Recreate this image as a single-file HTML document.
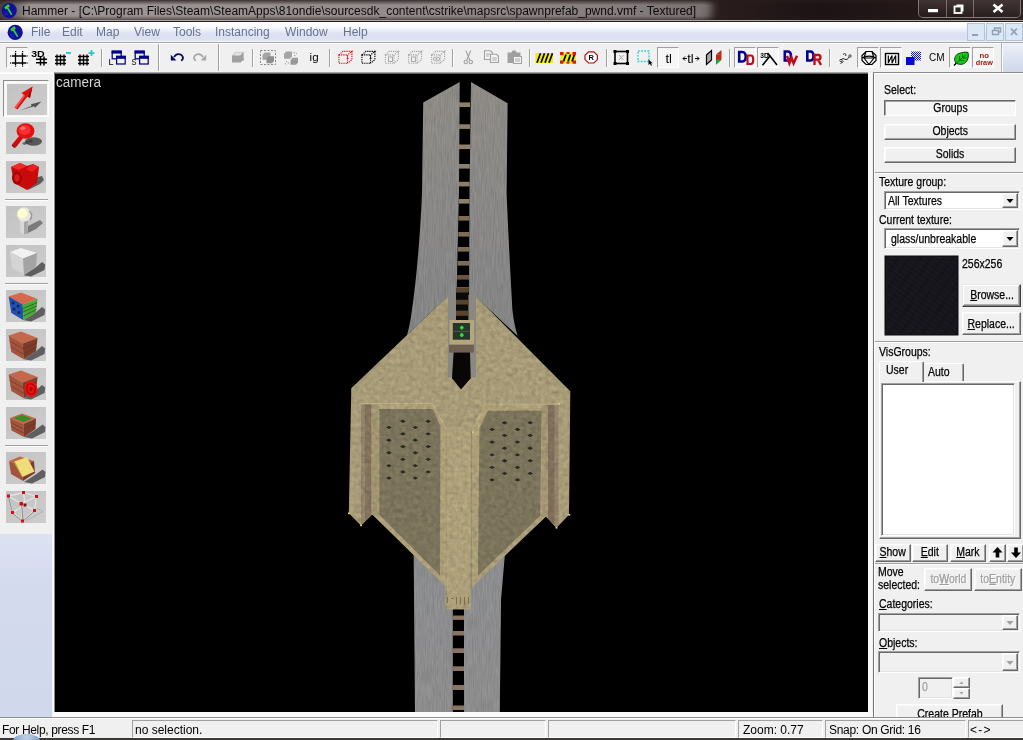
<!DOCTYPE html>
<html>
<head>
<meta charset="utf-8">
<title>Hammer</title>
<style>
html,body{margin:0;padding:0;}
body{width:1023px;height:740px;overflow:hidden;position:relative;background:#f0f0f0;font-family:"Liberation Sans",sans-serif;font-size:12px;color:#000;}
.a{position:absolute;}
.seg,.menu,.tt{will-change:transform;}
svg{will-change:transform;}
svg{position:absolute;overflow:visible;}
/* MS Sans Serif look-alike: taller, condensed */
.ms{-webkit-text-stroke:.25px currentColor;position:absolute;font-size:12.5px;line-height:14px;white-space:nowrap;transform:scaleX(0.84);transform-origin:0 0;color:#000;}
.msc{-webkit-text-stroke:.25px currentColor;position:absolute;font-size:12.5px;line-height:14px;white-space:nowrap;text-align:center;color:#000;}
.msc span{display:inline-block;transform:scaleX(0.84);}
.dis{color:#a0a0a0;text-shadow:1px 1px 0 #fff;}
u{text-decoration:underline;text-underline-offset:1px;}
/* classic 3D button */
.btn{position:absolute;box-sizing:border-box;background:#f0f0f0;border:1px solid;border-color:#fff #696969 #696969 #fff;box-shadow:inset -1px -1px 0 #a0a0a0, inset 1px 1px 0 #f8f8f8;}
.btnp{position:absolute;box-sizing:border-box;background:#f4f4f4;border:1px solid;border-color:#696969 #fff #fff #696969;box-shadow:inset 1px 1px 0 #a0a0a0;}
.sunk{position:absolute;box-sizing:border-box;border:1px solid;border-color:#a0a0a0 #fff #fff #a0a0a0;box-shadow:inset 1px 1px 0 #696969, inset -1px -1px 0 #e3e3e3;}
.hl{position:absolute;height:2px;border-top:1px solid #a0a0a0;border-bottom:1px solid #fff;box-sizing:border-box;}
.seg{position:absolute;font-size:12px;line-height:14px;white-space:nowrap;color:#000;}
.menu{position:absolute;top:25px;font-size:12px;line-height:14px;color:#66738c;white-space:nowrap;}
.chk{position:absolute;box-sizing:border-box;width:22px;height:21px;top:47px;background:#f6f6f6;border:1px solid;border-color:#a0a0a0 #fff #fff #a0a0a0;}
.vs{position:absolute;width:2px;box-sizing:border-box;border-left:1px solid #a0a0a0;border-right:1px solid #fff;}
.pane{position:absolute;top:720px;height:18px;box-sizing:border-box;border:1px solid;border-color:#a0a0a0 #fff #fff #a0a0a0;}
</style>
</head>
<body>
<!-- TITLE BAR -->
<div class="a" style="left:0;top:0;width:1023px;height:22px;background:linear-gradient(90deg,#2a1d1e 0%,#2a1d1e 70%,#1d1314 80%,#241819 90%,#2e2223 100%);overflow:hidden;">
  <div class="a" style="left:-40px;top:-6px;width:752px;height:30px;border-radius:0 12px 12px 0;background:linear-gradient(90deg,#9a9292 0%,#9c9494 25%,#938b8b 60%,#857d7d 88%,#787070 100%);filter:blur(4px);"></div>
  <div class="a" style="left:0;top:0;width:1023px;height:5px;background:linear-gradient(180deg,rgba(40,28,28,.8),rgba(40,28,28,0));"></div>
  <div class="a" style="left:0;top:16px;width:1023px;height:4px;background:linear-gradient(180deg,rgba(40,28,28,0),rgba(40,28,28,.5));"></div>
  <div class="a" style="left:0;top:0;width:30px;height:20px;background:linear-gradient(90deg,rgba(45,32,32,.75),rgba(45,32,32,0));"></div>
  <div class="a" style="left:0;top:20px;width:1023px;height:1px;background:#aaa4a4;"></div>
  <div class="a" style="left:0;top:21px;width:1023px;height:1px;background:#262222;"></div>
</div>
<svg style="left:1px;top:2px" width="17" height="17" viewBox="0 0 17 17"><circle cx="8.2" cy="8.6" r="7.6" fill="#10109c"/><circle cx="5" cy="12" r="2.2" fill="#1a1ab8"/><path d="M3.2 5.2 L7.2 2 L9 4.2 L7.4 5.6 L11.4 12.2 L10 13.2 L6 6.8 L4.8 7.4 Z" fill="#30d030"/></svg>
<div class="a tt" style="left:22px;top:4px;font-size:12px;line-height:15px;color:#0c0a0a;white-space:nowrap;">Hammer - [C:\Program Files\Steam\SteamApps\81ondie\sourcesdk_content\cstrike\mapsrc\spawnprefab_pwnd.vmf - Textured]</div>
<!-- caption buttons -->
<div class="a" style="left:918px;top:-3px;width:103px;height:21px;box-sizing:border-box;border:1px solid rgba(190,180,180,.55);border-radius:0 0 5px 5px;background:linear-gradient(180deg,rgba(90,78,78,.55),rgba(40,30,30,.35));"></div>
<div class="a" style="left:946px;top:0;width:1px;height:17px;background:rgba(190,180,180,.5);"></div>
<div class="a" style="left:973px;top:0;width:1px;height:17px;background:rgba(190,180,180,.5);"></div>
<svg style="left:918px;top:0" width="104" height="18" viewBox="918 0 104 18"><rect x="928" y="9" width="10" height="3.2" fill="#fff"/><path d="M956.5 4.5h7v7h-2v-5h-5z" fill="#fff"/><rect x="954.5" y="6.5" width="7" height="6.5" fill="none" stroke="#fff" stroke-width="1.8"/><path d="M993.5 4.5 L1002.5 12 M1002.5 4.5 L993.5 12" stroke="#fff" stroke-width="2.6" fill="none"/></svg>
<!-- MENU BAR -->
<div class="a" style="left:0;top:22px;width:1023px;height:20px;background:linear-gradient(180deg,#ffffff 0%,#fbfcfe 20%,#e9edf7 45%,#dde3f2 55%,#dbe1f0 85%,#e8ecf6 100%);"></div>
<div class="a" style="left:0;top:41px;width:1023px;height:1px;background:#f4f4f6;"></div>
<div class="a" style="left:0;top:42px;width:1023px;height:1px;background:#a8a8a8;"></div>
<svg style="left:7px;top:24px" width="17" height="17" viewBox="0 0 17 17"><circle cx="8.2" cy="8.4" r="7.6" fill="#10109c"/><circle cx="5" cy="12" r="2.2" fill="#1a1ab8"/><path d="M3.2 5.2 L7.2 2 L9 4.2 L7.4 5.6 L11.4 12.2 L10 13.2 L6 6.8 L4.8 7.4 Z" fill="#30d030"/></svg>
<div class="menu" style="left:31px">File</div>
<div class="menu" style="left:62px">Edit</div>
<div class="menu" style="left:96px">Map</div>
<div class="menu" style="left:134px">View</div>
<div class="menu" style="left:173px">Tools</div>
<div class="menu" style="left:215px">Instancing</div>
<div class="menu" style="left:285px">Window</div>
<div class="menu" style="left:343px">Help</div>
<div class="a" style="left:967px;top:23px;width:18px;height:18px;box-sizing:border-box;background:#dbe7f4;border:1px solid #b4c4d8;"></div>
<div class="a" style="left:986px;top:23px;width:18px;height:18px;box-sizing:border-box;background:#dbe7f4;border:1px solid #b4c4d8;"></div>
<div class="a" style="left:1005px;top:23px;width:18px;height:18px;box-sizing:border-box;background:#dbe7f4;border:1px solid #b4c4d8;"></div>
<svg style="left:967px;top:23px" width="56" height="18" viewBox="967 23 56 18"><rect x="972" y="34" width="6" height="2" fill="#8fa0b8"/><path d="M992.5 30.5h6v4h-6z M994.5 30v-2h6v4h-2" fill="none" stroke="#8fa0b8" stroke-width="1.4"/><path d="M1011 28.5l6 6.5m0-6.5l-6 6.5" stroke="#8fa0b8" stroke-width="1.8" fill="none"/></svg>
<!-- TOOLBAR -->
<div class="a" style="left:0;top:43px;width:1023px;height:29px;background:linear-gradient(180deg,#eef1f9 0%,#dfe5f3 40%,#cfd7ea 100%);"></div>
<div class="a" style="left:0;top:43px;width:1002px;height:29px;background:#f0f0f0;"></div>
<div class="a" style="left:0;top:43px;width:1002px;height:1px;background:#fff;"></div>
<div class="a" style="left:0;top:72px;width:54px;height:1px;background:#fafafa;"></div>
<div class="a" style="left:1001px;top:43px;width:1px;height:29px;background:#b4b4b4;"></div>
<div class="a" style="left:1002px;top:43px;width:1px;height:29px;background:#fff;"></div>
<!-- checked button backgrounds -->
<div class="chk" style="left:6px"></div>
<div class="chk" style="left:657px"></div>
<div class="chk" style="left:734px"></div>
<div class="chk" style="left:757px"></div>
<div class="chk" style="left:857px"></div>
<div class="chk" style="left:880px"></div>
<div class="chk" style="left:949px"></div>
<div class="chk" style="left:972px"></div>
<!-- separators -->
<div class="vs" style="left:101px;top:49px;height:18px"></div>
<div class="vs" style="left:158px;top:44px;height:27px"></div>
<div class="vs" style="left:218px;top:44px;height:27px"></div>
<div class="vs" style="left:252px;top:49px;height:18px"></div>
<div class="vs" style="left:329px;top:49px;height:18px"></div>
<div class="vs" style="left:452px;top:49px;height:18px"></div>
<div class="vs" style="left:529px;top:49px;height:18px"></div>
<div class="vs" style="left:606px;top:49px;height:18px"></div>
<div class="vs" style="left:729px;top:49px;height:18px"></div>
<div class="vs" style="left:829px;top:49px;height:18px"></div>
<svg style="left:0;top:43px" width="1023" height="30" viewBox="0 43 1023 30" font-family="Liberation Sans, sans-serif">
<!-- 1 grid -->
<g stroke="#000" stroke-width="1.3" fill="none"><path d="M15.500 53v12M22.500 53v12M12 56h14M12 63h14"/></g>
<g fill="#000"><rect x="15" y="51" width="1.2" height="1.2"/><rect x="22" y="51" width="1.2" height="1.2"/><rect x="10" y="55.4" width="1.2" height="1.2"/><rect x="10" y="62.4" width="1.2" height="1.2"/><rect x="26.5" y="55.4" width="1.2" height="1.2"/><rect x="26.5" y="62.4" width="1.2" height="1.2"/><rect x="15" y="65.5" width="1.2" height="1.2"/><rect x="22" y="65.5" width="1.2" height="1.2"/></g>
<!-- 2 3D grid -->
<text x="31.200" y="56.800" font-size="9.500" font-weight="bold" fill="#000" textLength="13.500" lengthAdjust="spacingAndGlyphs">3D</text>
<g stroke="#000" stroke-width="1.5" fill="none"><path d="M40.5 56.5v9M44 56.5v9M36 59.2h11M36 62.7h11"/></g>
<!-- 3 grid minus -->
<g stroke="#000" stroke-width="1.350" fill="none"><path d="M57 54.500v11M60.500 54.500v11M64 54.500v11M55 56.500h11M55 60h11M55 63.500h11"/></g>
<rect x="66" y="52" width="5" height="1.8" fill="#20c8c8"/>
<!-- 4 grid plus -->
<g stroke="#000" stroke-width="1.350" fill="none"><path d="M80 54.500v11M83.500 54.500v11M87 54.500v11M78 56.500h11M78 60h11M78 63.500h11"/></g>
<path d="M88.5 52.2h6v1.8h-6z M90.6 50h1.8v6h-1.8z" fill="#20c8c8"/>
<!-- 5,6 layers -->
<g id="lay"><rect x="112.200" y="51.200" width="9" height="7.600" fill="#f0f0f0" stroke="#000088" stroke-width="1.250"/><rect x="111.600" y="50.600" width="10.200" height="3" fill="#000088"/><rect x="116.600" y="56.400" width="8.600" height="7.600" fill="#f0f0f0" stroke="#000088" stroke-width="1.250"/><rect x="116" y="55.800" width="9.800" height="3" fill="#000088"/></g>
<use href="#lay" x="23"/>
<text x="108.600" y="64.800" font-size="9" fill="#000">L</text>
<text x="131.400" y="64.800" font-size="9" fill="#000" textLength="5" lengthAdjust="spacingAndGlyphs">S</text>
<!-- 7 undo / 8 redo -->
<path d="M170.800 54.800v5.600h5.600z" fill="#0a0a5a"/><path d="M174 57.200c1.800-3.800 7-4.200 8.600-.8.900 1.900.2 3.400-1.400 4.400" fill="none" stroke="#0a0a5a" stroke-width="1.700"/>
<path d="M206.200 54.800v5.600h-5.600z" fill="#a8a8a8"/><path d="M203 57.200c-1.800-3.800-7-4.200-8.600-.8-.9 1.900-.2 3.400 1.400 4.400" fill="none" stroke="#a8a8a8" stroke-width="1.700"/>
<!-- 9 grey cube -->
<path d="M232 55.700l3.200-3.400h8.400v7l-3 3.300h-8.600z" fill="#a0a0a0"/><path d="M232.600 55.500l3-2.900h7.200l-2.600 2.900z" fill="#e4e4e4"/><rect x="240.600" y="58.600" width="3.200" height="2" fill="#a0a0a0"/>
<!-- 10 group -->
<rect x="260.500" y="50.500" width="15" height="14" fill="none" stroke="#8a8a8a" stroke-width="1" stroke-dasharray="2 1.500"/>
<path d="M262.500 55l2-2.500h6v5l-2 2.300h-6z" fill="#a4a4a4"/><path d="M266.500 58.500l2-2.300h5.500v4.800l-2 2.200h-5.500z" fill="#8e8e8e"/>
<!-- 11 ungroup -->
<path d="M284 54l2-2.500h6v5l-2 2.300h-6z" fill="#a4a4a4"/><path d="M290.500 60l2-2.300h5.500v4.800l-2 2.200h-5.500z" fill="#9a9a9a"/>
<path d="M293.500 52.500l3.500 1M286 61l3 2.500M294 55.500l2.500.3M285 63.500l2 1" stroke="#9a9a9a" stroke-width="1" fill="none" stroke-dasharray="1.500 1"/>
<!-- 12 ig -->
<text x="309.600" y="60.800" font-size="11.500" fill="#000">ig</text>
<!-- 13-17 dotted cubes -->
<g id="dcube" fill="none" stroke-width="1.100" stroke-dasharray="1.300 .9"><path d="M338.900 54.900h8.600v8.400h-8.600z"/><path d="M338.900 54.900l4-3.500h9l-4.400 3.500"/><path d="M351.900 51.400v8.200l-4.400 3.700"/></g>
<use href="#dcube" stroke="#d01818"/>
<text x="346" y="58.500" font-size="6" fill="#d01818">1</text>
<use href="#dcube" x="23" stroke="#000"/>
<text x="369" y="58.500" font-size="6" fill="#000">1</text>
<use href="#dcube" x="46.500" stroke="#a8a8a8"/>
<rect x="388.500" y="57" width="4" height="4.500" fill="none" stroke="#a8a8a8" stroke-width="1"/>
<use href="#dcube" x="69.700" stroke="#a8a8a8"/>
<rect x="411.500" y="57" width="4" height="4.500" fill="none" stroke="#a8a8a8" stroke-width="1"/>
<use href="#dcube" x="92.700" stroke="#a8a8a8"/>
<ellipse cx="436.500" cy="59" rx="3.200" ry="2" fill="none" stroke="#a8a8a8" stroke-width="1"/><circle cx="436.500" cy="59" r="1" fill="#a8a8a8"/>
<!-- 18 scissors -->
<g stroke="#a2a2a2" stroke-width="1.100" fill="none"><path d="M465.800 50.500l4 9.500M470.800 50.500l-4 9.500"/><circle cx="465.800" cy="62" r="1.700"/><circle cx="470.800" cy="62" r="1.700"/></g>
<!-- 19 copy -->
<g stroke="#a2a2a2" stroke-width="1.100" fill="#f4f4f4"><path d="M484.500 50.800h6l2 2v6.700h-8z"/><path d="M490.500 54.300h6l2 2v6.200h-8z"/></g>
<path d="M486 54h4M486 56h3M492.300 58h4.500M492.300 60h4.500" stroke="#a2a2a2" stroke-width=".9"/>
<!-- 20 paste -->
<path d="M507.500 52.500h4l1-2h3l1 2h4v10.500h-13z" fill="#a0a0a0"/>
<rect x="513.500" y="56.500" width="8" height="7" fill="#f4f4f4" stroke="#a0a0a0" stroke-width="1"/>
<path d="M515 59h5M515 61h5" stroke="#a0a0a0" stroke-width=".9"/>
<!-- 21 hazard -->
<rect x="535.500" y="53" width="17.500" height="10" fill="#f0f000"/>
<g stroke="#000" stroke-width="1.700"><path d="M537 62.800l3.500-9.600M541 62.800l3.500-9.600M545 62.800l3.500-9.600M549 62.800l3.500-9.600"/></g>
<!-- 22 hazard red -->
<rect x="560.500" y="52.500" width="15.500" height="11" fill="#f0f000"/>
<g stroke="#000" stroke-width="1.800"><path d="M563.500 61.500l2.500-7M568 61.500l2.500-7M572 61.500l2.500-7"/></g>
<g fill="#d81818"><rect x="560" y="52" width="3.500" height="3.200"/><rect x="572.500" y="52" width="3.500" height="3.200"/><rect x="560" y="60.500" width="3.500" height="3.200"/><rect x="572.500" y="60.500" width="3.500" height="3.200"/><rect x="566.500" y="52" width="3" height="2"/><rect x="566.500" y="61.700" width="3" height="2"/></g>
<!-- 23 (R) -->
<path d="M588.600 51.800h5.200l3.600 3.400v4.400l-3.600 3.400h-5.200l-3.600-3.400v-4.400z" fill="#fff" stroke="#b01010" stroke-width="1.200"/>
<text x="588.600" y="60.400" font-size="7.500" font-weight="bold" fill="#000">R</text>
<!-- 24 box select -->
<rect x="615" y="51.500" width="12.500" height="12" fill="none" stroke="#000" stroke-width="1.600"/>
<g fill="#000"><rect x="613.500" y="50" width="3" height="3"/><rect x="626" y="50" width="3" height="3"/><rect x="613.500" y="62" width="3" height="3"/><rect x="626" y="62" width="3" height="3"/></g>
<path d="M619 55l4.500 5m0-5l-4.500 5" stroke="#aaa" stroke-width="1"/>
<!-- 25 cyan dotted -->
<rect x="638" y="51" width="11" height="10.500" fill="none" stroke="#30d0d0" stroke-width="1.400" stroke-dasharray="1.800 1.300"/>
<path d="M648.500 59.500v5.500l1.400-1.300 1.200 2 .9-.5-1.200-2h1.900z" fill="#000"/>
<!-- 26 tl -->
<text x="665.400" y="62.600" font-size="13" fill="#000">tl</text>
<!-- 27 <tl> -->
<text x="687.200" y="62.600" font-size="13" fill="#000">tl</text>
<path d="M683 58.500h4M683 58.500l2-2M683 58.500l2 2M699 58.500h-4M699 58.500l-2-2M699 58.500l-2 2" stroke="#000" stroke-width="1" fill="none"/>
<!-- 28 faces -->
<path d="M706.500 55l5-4.500v9.500l-5 4.500z" fill="#a8a8a8" stroke="#000" stroke-width="1.200"/>
<path d="M716 54.500l5.500-4.500v5z" fill="#c02818"/><path d="M716 54.500l5.500 .5v4.500l-5.500 5z" fill="#c02818"/><path d="M716 59.500l5.500 .2v0l-5.500 5z" fill="#20a040"/>
<!-- 29 OD -->
<path d="M739.200 52h3.200c4.400 0 4.400 9.500 0 9.500h-3.200z" fill="none" stroke="#000090" stroke-width="2.600"/>
<path d="M747.500 55.500h3.500c3 0 3 8.500 0 8.500h-3.500z" fill="none" stroke="#c00c14" stroke-width="2.200"/>
<!-- 30 3D lambda -->
<text x="760.300" y="58" font-size="7.500" font-weight="bold" fill="#000" textLength="8.500" lengthAdjust="spacingAndGlyphs">3D</text>
<path d="M767.500 53l2.500 3l-7.500 9.200M770 56l7 9" stroke="#000" stroke-width="1.600" fill="none"/>
<!-- 31 OW -->
<path d="M784.800 51.500h3c4.200 0 4.200 9 0 9h-3z" fill="none" stroke="#000090" stroke-width="2.600"/>
<path d="M787 55.800l2.400 7.400 2.100-5.400 2.100 5.400 3.400-7.400" fill="none" stroke="#c00c14" stroke-width="2.500" stroke-linejoin="miter"/>
<!-- 32 OR -->
<path d="M807.300 51.500h3c4.200 0 4.200 9 0 9h-3z" fill="none" stroke="#000090" stroke-width="2.600"/>
<path d="M814.500 65v-10h4c2.600 0 2.600 4.600 0 4.600h-4m3.500 0l3 5.400" fill="none" stroke="#c00c14" stroke-width="2.400"/>
<!-- 33 path -->
<path d="M841 60c3-4 5 3 8-3M843 54.500c2-2 4 0 2.500 1.500M840.500 63.500l3-2" stroke="#222" stroke-width="1" fill="none"/><circle cx="841" cy="60.500" r="1.200" fill="none" stroke="#222" stroke-width=".8"/><circle cx="850" cy="56" r="1.200" fill="none" stroke="#222" stroke-width=".8"/>
<!-- 34 sphere -->
<g stroke="#000" stroke-width="1.200" fill="none"><path d="M866 51.500h6l4 4v5l-4 4h-6l-4-4v-5z"/><path d="M862 58c3-2.500 11-2.500 14 0M866 51.500l-2 6.500 5 6.500M872 51.500l2 6.500-5 6.500M864 58h10"/></g>
<!-- 35 WW -->
<rect x="885.500" y="53.500" width="13" height="11" fill="#fff" stroke="#000" stroke-width="1.400"/>
<path d="M888.300 55.500v7.500l3.700-7.500v7.500l3.700-7.500v7.500" stroke="#000" stroke-width="1.150" fill="none"/>
<!-- 36 blue squares -->
<defs><pattern id="dith" width="2" height="2" patternUnits="userSpaceOnUse"><rect width="2" height="2" fill="#f0f0f0"/><rect width="1" height="1" fill="#1010e0"/><rect x="1" y="1" width="1" height="1" fill="#1010e0"/></pattern></defs>
<rect x="911" y="51.500" width="10" height="9" fill="url(#dith)"/>
<rect x="906" y="57" width="8.500" height="8" fill="#0808d8"/>
<!-- 37 CM -->
<text x="929" y="61.400" font-size="10" fill="#000" textLength="15.500" lengthAdjust="spacingAndGlyphs">CM</text>
<!-- 38 leaf -->
<path d="M954 65.500l2.500-2.500" stroke="#000" stroke-width="1.400"/>
<path d="M956 63c-2.500-3-1.500-8 3-9.500c3-1.200 6.500-1.800 9-1 .8 3.500.3 7.500-2.500 10-2.500 2.300-6.500 2.500-9.500.5z" fill="#18c818" stroke="#004000" stroke-width="1"/>
<path d="M957 62.500l8.500-7.500M959.500 60v-4M962.500 57.500v-3M960 60.500h4M963 58h3.500" stroke="#006000" stroke-width=".9" fill="none"/>
<!-- 39 no draw -->
<text x="979.500" y="58" font-size="8" font-weight="bold" fill="#a81818" textLength="9.500" lengthAdjust="spacingAndGlyphs">no</text>
<text x="975.800" y="65" font-size="8" font-weight="bold" fill="#a81818" textLength="17" lengthAdjust="spacingAndGlyphs">draw</text>
</svg>
<!-- LEFT PALETTE -->
<div class="a" style="left:0;top:73px;width:54px;height:461px;background:#f0f0f0;"></div>
<div class="a" style="left:0;top:73px;width:54px;height:1px;background:#fff;"></div>
<div class="a" style="left:0;top:534px;width:54px;height:183px;background:linear-gradient(180deg,#dde2f2,#d3daee 30%,#d0d8ec);"></div>
<div class="a" style="left:52px;top:73px;width:1px;height:644px;background:#f4f4f6;"></div>
<div class="a" style="left:53px;top:73px;width:1px;height:644px;background:#fcfcfc;"></div>
<div class="a" style="left:54px;top:73px;width:1px;height:640px;background:#8a8a8a;"></div>
<div class="a" style="left:3px;top:80px;width:46px;height:37px;box-sizing:border-box;background:#f7f7f7;border:1px solid;border-color:#8c8c8c #fff #fff #8c8c8c;"></div>
<div class="hl" style="left:5px;top:199px;width:43px;"></div>
<div class="hl" style="left:5px;top:283px;width:43px;"></div>
<div class="hl" style="left:5px;top:445px;width:43px;"></div>
<svg style="left:0;top:73px" width="54" height="461" viewBox="0 73 54 461">
<defs>
<linearGradient id="tbg" x1="0" y1="0" x2="1" y2="1"><stop offset="0" stop-color="#c2c2c2"/><stop offset="1" stop-color="#cdcdcd"/></linearGradient>
<g id="tile"><rect width="40" height="32" fill="url(#tbg)"/></g>
<path id="shad" d="M17.600 30.300L30 22.300 36 17l3.200 2.500L38.500 25 25 31.500z" fill="#4c4c4c" opacity=".85"/>
<g id="brick"><use href="#shad"/><path d="M2.700 6.500L15 2.600 31.600 9 16.700 14.400z" fill="#c4684c"/><path d="M2.700 6.500L16.700 14.400 17.600 30.300 5.300 23z" fill="#a4543c"/><path d="M16.700 14.400L31.600 9 30 22.300 17.600 30.300z" fill="#7c3c2c"/><path d="M3.500 12l13.500 7.700M4.300 17.500l13 7.700M17 19.700l14-5.800M17.300 25l13.300-7" stroke="#5a2c20" stroke-width=".7" fill="none" opacity=".7"/></g>
</defs>
<!-- 1 arrow (pressed) -->
<g transform="translate(7,84)"><rect width="40" height="31" fill="url(#tbg)"/><path d="M12.500 26.500l12-4.500-.5-1.800 10.500-2.700-6.500 6.200-.8-1.500z" fill="#3c3c3c" opacity=".85"/><path d="M7.500 23.500L17 11l-2.500-2L25.500 2.500 23 14l-2.500-1.500L10.500 25.500z" fill="#e01010"/><path d="M7.500 23.500L17 11l1.200.8L9 24.700z" fill="#ff5050"/><path d="M20.500 12.500L23 14l2.500-11.500z" fill="#a00808"/></g>
<!-- 2 magnifier -->
<g transform="translate(6,122)"><use href="#tile"/><ellipse cx="27.500" cy="19.500" rx="8.500" ry="4.200" fill="#3c3c3c" opacity=".8"/><path d="M16 21l10-4 1 3-9 3z" fill="#3c3c3c" opacity=".7"/><path d="M6.500 22l7-8.500 3.500 2.800-7 9z" fill="#d00a0a"/><path d="M6.500 22l3.500 3.300-1.800.8-2.600-2.500z" fill="#900606"/><ellipse cx="19.500" cy="9" rx="9" ry="7.800" fill="#e01212"/><ellipse cx="18.500" cy="8" rx="6" ry="5" fill="#f43030"/><ellipse cx="16.800" cy="6.300" rx="2.400" ry="1.800" fill="#ff6a6a"/></g>
<!-- 3 camera -->
<g transform="translate(6,161)"><use href="#tile"/><path d="M22 29l12-6 4-4-2-4-8 2z" fill="#4a4a4a" opacity=".85"/><path d="M5 6l9-4 7 3 6-2 6 3-2 16-10 7-13-7z" fill="#c80a0a"/><path d="M5 6l9-4 7 3-8 4z" fill="#f02828"/><ellipse cx="11" cy="17" rx="5" ry="6.500" fill="#a00606"/><ellipse cx="11" cy="17" rx="2.600" ry="3.800" fill="#e01818"/><path d="M20 8l7-5 6 3-7 5z" fill="#e82020"/></g>
<!-- 4 light bulb -->
<g transform="translate(6,206)"><use href="#tile"/><path d="M20 28l10-5 7-6-3-3-12 6z" fill="#5a5a5a" opacity=".7"/><path d="M14 14h8l-.5 12.500-3.500 2-3.500-2z" fill="#d8d8d8"/><path d="M18 14h4l-.5 12.500-3.500 2z" fill="#a8a8a8"/><circle cx="18" cy="8.500" r="7.200" fill="#e8e8e0"/><circle cx="16.500" cy="7.500" r="4.800" fill="#ffffd0"/><path d="M23 5c3 2 3.500 6 1 9" stroke="#999" stroke-width="1.500" fill="none"/></g>
<!-- 5 grey cube -->
<g transform="translate(6,245)"><use href="#tile"/><use href="#shad"/><path d="M4 7L15 3 31 8 17 13.500z" fill="#f2f2f2"/><path d="M4 7L17 13.500 18 29.500 6 23z" fill="#d4d4d4"/><path d="M17 13.500L31 8 30 22 18 29.500z" fill="#a4a4a4"/></g>
<!-- 6 textured cube -->
<g transform="translate(6,290)"><use href="#tile"/><use href="#shad"/><path d="M2.700 6.500L15 2.600 31.600 9 16.700 14.400z" fill="#d8684c"/><path d="M2.700 6.500L16.700 14.400 17.600 30.300 5.300 23z" fill="#2050b0"/><path d="M16.700 14.400L31.600 9 30 22.300 17.600 30.300z" fill="#48a838"/><path d="M17 18.500l14-5.800M17.200 22l13.500-6M17.400 26l13-6.500" stroke="#2a7020" stroke-width="1" fill="none"/><g fill="#102860"><circle cx="7" cy="13" r="1.500"/><circle cx="12" cy="16" r="1.500"/><circle cx="8" cy="19" r="1.500"/><circle cx="13" cy="22.500" r="1.500"/></g></g>
<!-- 7 brick cube -->
<g transform="translate(6,329)"><use href="#tile"/><use href="#brick"/></g>
<!-- 8 brick + decal -->
<g transform="translate(6,368)"><use href="#tile"/><use href="#brick"/><ellipse cx="25" cy="21" rx="6.500" ry="8" fill="#f01010" transform="rotate(-12 25 21)"/><ellipse cx="25" cy="21" rx="4.200" ry="5.400" fill="none" stroke="#a00808" stroke-width="1.200" transform="rotate(-12 25 21)"/><ellipse cx="25" cy="21" rx="1.600" ry="2.200" fill="#a00808"/></g>
<!-- 9 brick + grass -->
<g transform="translate(6,407)"><use href="#tile"/><path d="M18 30l12.500-8 6-4.500 3 2.500-.5 5-13 6.500z" fill="#4c4c4c" opacity=".85"/><path d="M4 11L16 6.500 30 11.500 17.500 17z" fill="#c4684c"/><path d="M7.500 11l8.500-3 10 3.500-8.500 3.500z" fill="#3c8c24"/><path d="M4 11L17.500 17 18 30 5.500 23.500z" fill="#a4543c"/><path d="M17.500 17L30 11.500 29.500 22 18 30z" fill="#7c3c2c"/><path d="M4.600 15.500l13 6.500M5 19.500l13 6.500M17.700 22l12-5.800" stroke="#5a2c20" stroke-width=".7" fill="none" opacity=".7"/></g>
<!-- 10 brick + overlay -->
<g transform="translate(6,452)"><use href="#tile"/><path d="M18 30l12.500-8 6-4.500 3 2.500-.5 5-13 6.500z" fill="#4c4c4c" opacity=".85"/><path d="M3 9L14 4.500 28 9 16 14z" fill="#c4684c"/><path d="M3 9L16 14 17 29 5 22z" fill="#a4543c"/><path d="M16 14L28 9 29 21 17 29z" fill="#7c3c2c"/><path d="M8.500 9.500L21 5l7.500 14.500L16.500 25z" fill="#f0dc78"/><path d="M8.500 9.500l8 15.500-1.500-1.500L7.500 10z" fill="#b8a050"/></g>
<!-- 11 vertex cube -->
<g transform="translate(6,491)"><use href="#tile"/><path d="M20 30l12-7 5-2.500-6-3" stroke="#aaa" stroke-width=".8" fill="none"/><g stroke="#e4e4e4" stroke-width="1.300" fill="none"><path d="M2.500 5L17.500 1.500 30.500 5.500 15 12.500z"/><path d="M2.500 5L6.500 21.500 16.500 30 15 12.500M16.500 30L28.500 19.500 30.500 5.500M17.500 1.500L19 14 6.500 21.500M19 14l9.500 5.500"/></g><g stroke="#555" stroke-width=".6" fill="none"><path d="M2.500 5.500L6.500 22 16.500 30.500M15.500 12.500l1.500 17.500M16.500 30.500L28.500 20"/></g><g fill="#d01010"><rect x="1" y="3.500" width="3" height="3"/><rect x="16" y="0" width="3" height="3"/><rect x="29" y="4" width="3" height="3"/><rect x="13.500" y="11" width="3.500" height="3.500"/><rect x="5" y="20" width="3" height="3"/><rect x="15" y="28.500" width="3" height="3"/><rect x="27" y="18" width="3" height="3"/><rect x="17.500" y="12.500" width="3" height="3" fill="#801010"/></g></g>
</svg>
<!-- VIEWPORT -->
<div class="a" style="left:54px;top:72px;width:814px;height:1px;background:#a4a4a4;"></div>
<div class="a" style="left:54px;top:73px;width:814px;height:1px;background:#5a5a5a;"></div>
<div class="a" style="left:55px;top:74px;width:813px;height:638px;background:#000;"></div>
<div class="a" style="left:53px;top:712px;width:820px;height:5px;background:#fbfbfb;"></div>
<div class="a" style="left:868px;top:73px;width:4px;height:644px;background:#f8f8f8;"></div>
<svg style="left:55px;top:73px" width="813" height="639" viewBox="55 73 813 639" font-family="Liberation Sans, sans-serif">
<defs>
<filter id="nz" x="0" y="0" width="100%" height="100%"><feTurbulence type="fractalNoise" baseFrequency="0.22" numOctaves="3" seed="3"/><feColorMatrix type="matrix" values="0 0 0 0 0  0 0 0 0 0  0 0 0 0 0  .7 .7 .7 0 -0.75"/></filter>
<filter id="nz2" x="0" y="0" width="100%" height="100%"><feTurbulence type="fractalNoise" baseFrequency="0.9 0.06" numOctaves="2" seed="7"/><feColorMatrix type="matrix" values="0 0 0 0 0  0 0 0 0 0  0 0 0 0 0  .8 .8 .8 0 -0.95"/></filter>
<linearGradient id="roadU" x1="0" y1="82" x2="0" y2="340" gradientUnits="userSpaceOnUse"><stop offset="0" stop-color="#94918c"/><stop offset="1" stop-color="#8a8a8c"/></linearGradient>
<linearGradient id="roadL" x1="0" y1="545" x2="0" y2="712" gradientUnits="userSpaceOnUse"><stop offset="0" stop-color="#929396"/><stop offset="1" stop-color="#929292"/></linearGradient>
<clipPath id="cRoad"><path d="M459.700 82L423.200 102.400 422 194Q419 260 412 310Q410 325 407 335L447 297 456.500 297 459 190Z M471 82L507.600 103.200 506.600 194Q509 250 512.400 310Q514 325 517.700 336L476 297 469 297 469.500 194Z M413.600 545L415 712 452.800 712 452.800 600 464 600 464 712 499.800 712 501 600 505.700 545Z"/></clipPath>
<clipPath id="cSand"><path id="sandP" d="M447.400 296.600L476 296.600 570.300 391.300 569 514.800 556.400 527.800 546 516.500 507 553.700 478 581.500 471 588.500 471 609.200 445.200 609.200 445.200 586 372.300 514.500 361 525.400 348.800 513.200 351.300 388.200Z"/></clipPath>
</defs>
<!-- upper road -->
<path d="M459.700 82L423.200 102.400 422 194Q419 260 412 310Q410 325 407 335L447 297 456.500 297 459 190Z" fill="url(#roadU)"/>
<path d="M471 82L507.600 103.200 506.600 194Q509 250 512.400 310Q514 325 517.700 336L476 297 469 297 469.500 194Z" fill="url(#roadU)"/>
<!-- lower road -->
<path d="M413.600 545L415 712 452.800 712 452.800 600 464 600 464 712 499.800 712 501 600 505.700 545Z" fill="url(#roadL)"/>
<g clip-path="url(#cRoad)"><rect x="400" y="80" width="125" height="632" fill="#2a2a30" filter="url(#nz2)" opacity=".16"/></g>
<!-- upper ladder rungs -->
<g fill="#8e7e6c"><rect x="459" y="102.400" width="11" height="4.600"/><rect x="459" y="124.300" width="11" height="4.600"/><rect x="459" y="144.500" width="11" height="4.600"/><rect x="459" y="164" width="10.800" height="4.600"/><rect x="459" y="181.800" width="10.600" height="4.600"/><rect x="459" y="199" width="10.500" height="4.600"/></g>
<g fill="#7e6c5a"><rect x="458.600" y="216" width="10.800" height="4.600"/><rect x="458.300" y="232" width="11" height="4.600"/><rect x="458" y="247" width="11.200" height="4.600"/><rect x="457.600" y="261" width="11.500" height="4.600"/></g>
<g fill="#6a5644"><rect x="457.200" y="275" width="11.800" height="4.600"/><rect x="456.800" y="287" width="12.200" height="4.800"/></g>
<!-- lower ladder rungs -->
<g fill="#8a7462"><rect x="452.800" y="615.500" width="11.200" height="4.400"/><rect x="452.800" y="631" width="11.200" height="4.500"/><rect x="452.800" y="648.300" width="11.200" height="4.700"/><rect x="452.800" y="666.300" width="11.200" height="4.700"/><rect x="452.800" y="685" width="11.200" height="5"/><rect x="452.800" y="705.500" width="11.200" height="4.500"/></g>
<!-- sand diamond -->
<use href="#sandP" fill="#b3a680"/>
<g clip-path="url(#cSand)">
<rect x="446.400" y="431" width="25" height="180" fill="#b9ab82"/><path d="M446.400 431v180M471.400 431v180" stroke="#9c9074" stroke-width=".9"/>
<!-- left courtyard -->
<path d="M360.600 403L432.500 403 446.500 429 446.500 587 372.300 514.500 361 525.400 360.600 520Z" fill="#b8aa80"/>
<path d="M361 404.500L364.500 404.500 364.500 522 361 525Z" fill="#9c8c72"/><path d="M364.500 404.500L371.500 404.500 371.500 515 364.500 522Z" fill="#8c7a64"/>
<path d="M371.500 404.500h7.800v110l-7.800 .5z" fill="#ad9f78"/>
<path d="M379.300 408.900L432.900 408.900 440.400 426.300 440 575.400 379.300 514.800Z" fill="#847c62"/>
<path d="M360.600 403.500L432.500 403.500 446.500 429.500" stroke="#c8ba90" stroke-width="1" fill="none"/>
<!-- right courtyard -->
<path d="M559.400 403.700L485.600 403.700 472.400 429 472.400 583 546 516.500 556.400 527.800 559.400 524Z" fill="#b8aa80"/>
<path d="M554.700 404.500L558.500 404.500 558.500 525.500 556.400 527.500 554.700 526Z" fill="#9c8c72"/><path d="M547.800 404.500L554.700 404.500 554.700 526 547.800 518.500Z" fill="#887662"/>
<path d="M541.500 404.500h6.300v114l-6.300-2z" fill="#ad9f78"/>
<path d="M541.500 410.700L488 410.700 479.400 427.800 478 575.600 540.200 515.700Z" fill="#847c62"/>
<path d="M559.400 404.200L485.600 404.200 472.400 429.500" stroke="#c8ba90" stroke-width="1" fill="none"/>
<!-- spikes -->
<g fill="#2e2c24">
<g id="spL"><path d="M400 421.300l2.800-1.700 3 1.700-2.900 1.600zM425.300 421.300l2.800-1.700 3 1.700-2.900 1.600zM386 427.500l2.800-1.700 3 1.700-2.900 1.600zM412.400 427.500l2.800-1.700 3 1.700-2.900 1.600z"/></g>
<use href="#spL" y="12.700"/><use href="#spL" y="25.300"/><use href="#spL" y="38.200"/><use href="#spL" y="50.600"/>
<g id="spR"><path d="M501.700 422.800l2.800-1.700 3 1.700-2.900 1.600zM527.300 422.800l2.800-1.700 3 1.700-2.900 1.600zM489.200 429.400l2.800-1.700 3 1.700-2.900 1.600zM514.600 429.400l2.800-1.700 3 1.700-2.900 1.600z"/></g>
<use href="#spR" y="12.700"/><use href="#spR" y="25.500"/><use href="#spR" y="38"/><use href="#spR" y="50.600"/>
</g>
<!-- noise on sand -->
<rect x="345" y="290" width="230" height="325" fill="#4a3c20" filter="url(#nz)" opacity=".22"/>
</g>
<!-- centre frame -->
<rect x="448" y="295" width="28" height="82.500" fill="#8b8782"/>
<rect x="456" y="288" width="12.400" height="32" fill="#0c0a08"/>
<g fill="#57452f"><rect x="456" y="288" width="12.400" height="4.500"/><rect x="456" y="299.800" width="12.400" height="4.700"/><rect x="456" y="310.600" width="12.400" height="5.200"/></g>
<rect x="449.400" y="320" width="24.800" height="24.500" fill="#b4a57b"/>
<rect x="452.800" y="323" width="17.200" height="16.700" fill="#27352c"/>
<path d="M452.800 331.300h17.200" stroke="#4a5a4c" stroke-width="1"/>
<g fill="#2ee02e"><path d="M459.600 328.300l1-2 1.200-.8 1.200.8 1 2-1.200.3v1h-2v-1z"/><path d="M459.600 335.600l1-2 1.200-.8 1.200.8 1 2-1.200.3v1h-2v-1z"/></g>
<rect x="449" y="344.800" width="24.800" height="7.800" fill="#6e5f50"/>
<path d="M453.600 352.600L470 352.600 470.700 378.200 461 389.400 452 378.200Z" fill="#090706"/>
<!-- column markings -->
<path d="M447.500 597v6M451 598.500h2.500M456.500 597v7.500M460.500 597v7.500M464.500 597v8M468.500 597v7" stroke="#6e6248" stroke-width=".8" fill="none"/>
<!-- corner highlights -->
<g fill="#e8dc70"><rect x="348" y="512.600" width="1.800" height="1.600"/><rect x="360.200" y="524.600" width="1.800" height="1.600"/><rect x="568.400" y="514" width="1.800" height="1.600"/><rect x="555.600" y="527" width="1.800" height="1.600"/><rect x="558.600" y="403" width="1.600" height="1.600"/><rect x="472" y="431.500" width="1.400" height="1.400"/></g>
<text x="56" y="87" font-size="14" fill="#d4d4d4" textLength="45" lengthAdjust="spacingAndGlyphs">camera</text>
</svg>
<!-- RIGHT PANEL -->
<div class="a" style="left:873px;top:73px;width:150px;height:645px;background:#f0f0f0;"></div>
<div class="a" style="left:873px;top:72px;width:1px;height:645px;background:#747474;"></div>
<div class="a" style="left:874px;top:73px;width:1px;height:644px;background:#fff;"></div>
<div class="a" style="left:873px;top:72px;width:150px;height:1px;background:#8c8c8c;"></div>
<div class="a" style="left:874px;top:73px;width:149px;height:1px;background:#fff;"></div>
<div class="ms" style="left:884px;top:83px;">Select:</div>
<div class="btnp" style="left:884px;top:100px;width:132px;height:16px;background:#f6f6f6;"></div>
<div class="msc" style="left:884px;top:101px;width:132px;"><span>Groups</span></div>
<div class="btn" style="left:884px;top:124px;width:132px;height:16px;"></div>
<div class="msc" style="left:884px;top:124px;width:132px;"><span>Objects</span></div>
<div class="btn" style="left:884px;top:147px;width:132px;height:16px;"></div>
<div class="msc" style="left:884px;top:147px;width:132px;"><span>Solids</span></div>
<div class="hl" style="left:875px;top:172px;width:148px;"></div>
<div class="ms" style="left:879px;top:175px;">Texture group:</div>
<div class="sunk" style="left:884px;top:191px;width:136px;height:19px;background:#fff;"></div>
<div class="ms" style="left:888px;top:194px;">All Textures</div>
<div class="btn" style="left:1002px;top:193px;width:16px;height:15px;"></div>
<svg style="left:1002px;top:193px" width="16" height="15"><path d="M4.5 6h7l-3.5 4z" fill="#000"/></svg>
<div class="ms" style="left:879px;top:213px;">Current texture:</div>
<div class="sunk" style="left:884px;top:228px;width:136px;height:21px;background:#fff;"></div>
<div class="ms" style="left:891px;top:232px;">glass/unbreakable</div>
<div class="btn" style="left:1002px;top:230px;width:16px;height:17px;"></div>
<svg style="left:1002px;top:231px" width="16" height="15"><path d="M4.5 6h7l-3.5 4z" fill="#000"/></svg>
<!-- texture swatch -->
<svg style="left:885px;top:256px" width="73" height="79" viewBox="0 0 73 79"><defs><pattern id="gl" width="9" height="9" patternUnits="userSpaceOnUse" patternTransform="rotate(35)"><rect width="9" height="9" fill="#15151b"/><path d="M0 2h9M0 6.5h9" stroke="#1a1a21" stroke-width="1"/><path d="M3 0v9" stroke="#101015" stroke-width="1"/></pattern></defs><rect width="73" height="79" fill="url(#gl)"/><rect width="73" height="79" fill="none" stroke="#0a0a0e" stroke-width="1"/></svg>
<div class="ms" style="left:962px;top:257px;">256x256</div>
<div class="btn" style="left:962px;top:284px;width:59px;height:23px;border-color:#e8e8e8 #404040 #404040 #e8e8e8;box-shadow:inset -1px -1px 0 #808080, inset 1px 1px 0 #fff, inset -2px -2px 0 #b0b0b0;"></div>
<div class="msc" style="left:963px;top:288px;width:59px;"><span><u>B</u>rowse...</span></div>
<div class="btn" style="left:962px;top:312px;width:59px;height:23px;"></div>
<div class="msc" style="left:962px;top:317px;width:59px;"><span><u>R</u>eplace...</span></div>
<div class="hl" style="left:875px;top:341px;width:148px;"></div>
<div class="ms" style="left:879px;top:345px;">VisGroups:</div>
<!-- tabs -->
<div class="a" style="left:879px;top:381px;width:142px;height:158px;box-sizing:border-box;border:1px solid;border-color:#fff #696969 #696969 #fff;box-shadow:inset -1px -1px 0 #a0a0a0;"></div>
<div class="a" style="left:879px;top:361px;width:45px;height:21px;box-sizing:border-box;background:#f0f0f0;border:1px solid;border-color:#fff #696969 transparent #fff;border-bottom:none;border-radius:2px 2px 0 0;box-shadow:inset -1px 0 0 #a0a0a0;"></div>
<div class="a" style="left:924px;top:363px;width:40px;height:18px;box-sizing:border-box;background:#f0f0f0;border:1px solid;border-color:#fff #696969 transparent #f0f0f0;border-bottom:none;border-radius:2px 2px 0 0;box-shadow:inset -1px 0 0 #a0a0a0;"></div>
<div class="ms" style="left:886px;top:363px;">User</div>
<div class="ms" style="left:928px;top:365px;">Auto</div>
<div class="sunk" style="left:881px;top:383px;width:134px;height:153px;background:#fff;"></div>
<!-- buttons row -->
<div class="btn" style="left:875px;top:544px;width:36px;height:18px;"></div>
<div class="msc" style="left:875px;top:545px;width:36px;"><span><u>S</u>how</span></div>
<div class="btn" style="left:912px;top:544px;width:36px;height:18px;"></div>
<div class="msc" style="left:912px;top:545px;width:36px;"><span><u>E</u>dit</span></div>
<div class="btn" style="left:950px;top:544px;width:36px;height:18px;"></div>
<div class="msc" style="left:950px;top:545px;width:36px;"><span><u>M</u>ark</span></div>
<div class="btn" style="left:989px;top:544px;width:17px;height:18px;"></div>
<div class="btn" style="left:1007px;top:544px;width:17px;height:18px;"></div>
<svg style="left:989px;top:544px" width="34" height="18" viewBox="989 544 34 18"><path d="M997.5 547l5 5.5h-3.2v5h-3.6v-5h-3.2z" fill="#000"/><path d="M1016 558l5-5.5h-3.2v-5h-3.6v5h-3.2z" fill="#000"/></svg>
<div class="hl" style="left:875px;top:563px;width:148px;"></div>
<div class="ms" style="left:878px;top:566px;line-height:13px;">Move<br>selected:</div>
<div class="btn" style="left:924px;top:568px;width:48px;height:23px;"></div>
<div class="msc dis" style="left:924px;top:572px;width:48px;"><span>to<u>W</u>orld</span></div>
<div class="btn" style="left:974px;top:568px;width:48px;height:23px;"></div>
<div class="msc dis" style="left:974px;top:572px;width:48px;"><span>to<u>E</u>ntity</span></div>
<div class="ms" style="left:879px;top:597px;"><u>C</u>ategories:</div>
<div class="sunk" style="left:878px;top:613px;width:142px;height:19px;"></div>
<div class="btn" style="left:1002px;top:615px;width:16px;height:15px;"></div>
<svg style="left:1002px;top:615px" width="16" height="15"><path d="M4.5 6h7l-3.5 4z" fill="#a0a0a0"/></svg>
<div class="ms" style="left:879px;top:636px;"><u>O</u>bjects:</div>
<div class="sunk" style="left:878px;top:651px;width:142px;height:22px;"></div>
<div class="btn" style="left:1002px;top:653px;width:16px;height:18px;"></div>
<svg style="left:1002px;top:655px" width="16" height="15"><path d="M4.5 6h7l-3.5 4z" fill="#a0a0a0"/></svg>
<div class="sunk" style="left:918px;top:677px;width:35px;height:22px;"></div>
<div class="ms" style="left:922px;top:680px;color:#a0a0a0;">0</div>
<div class="btn" style="left:953px;top:677px;width:17px;height:11px;"></div>
<div class="btn" style="left:953px;top:688px;width:17px;height:11px;"></div>
<svg style="left:953px;top:677px" width="17" height="22"><path d="M6.5 7h4l-2-2.5z M6.5 15h4l-2 2.5z" fill="#a0a0a0"/></svg>
<div class="a" style="left:896px;top:704px;width:107px;height:13px;overflow:hidden;"><div class="btn" style="left:0;top:0;width:107px;height:22px;"></div><div class="msc" style="left:0;top:3px;width:107px;"><span>Create Prefab</span></div></div>
<!-- STATUS BAR -->
<div class="a" style="left:0;top:717px;width:1023px;height:1px;background:#8e8e8e;"></div>
<div class="a" style="left:0;top:718px;width:1023px;height:22px;background:#f0f0f0;"></div>
<div class="a" style="left:0;top:718px;width:1023px;height:1px;background:#fff;"></div>
<div class="seg" style="left:2px;top:723px;letter-spacing:-.35px;">For Help, press F1</div>
<div class="pane" style="left:132px;width:306px;"></div>
<div class="seg" style="left:135px;top:723px;">no selection.</div>
<div class="pane" style="left:440px;width:106px;"></div>
<div class="pane" style="left:548px;width:188px;"></div>
<div class="pane" style="left:738px;width:85px;"></div>
<div class="seg" style="left:743px;top:723px;">Zoom: 0.77</div>
<div class="pane" style="left:825px;width:141px;"></div>
<div class="seg" style="left:829px;top:723px;letter-spacing:-.3px;">Snap: On Grid: 16</div>
<div class="pane" style="left:968px;width:56px;"></div>
<div class="seg" style="left:970px;top:723px;letter-spacing:1.3px;">&lt;-&gt;</div>
<div class="a" style="left:0;top:738px;width:1023px;height:2px;background:#3c3838;"></div>
<div class="a" style="left:13px;top:734px;width:27px;height:14px;border-radius:50%;background:radial-gradient(ellipse at 50% 25%,#c4d4e8,#8ea8cc 55%,#5f7fae);"></div>
</body>
</html>
